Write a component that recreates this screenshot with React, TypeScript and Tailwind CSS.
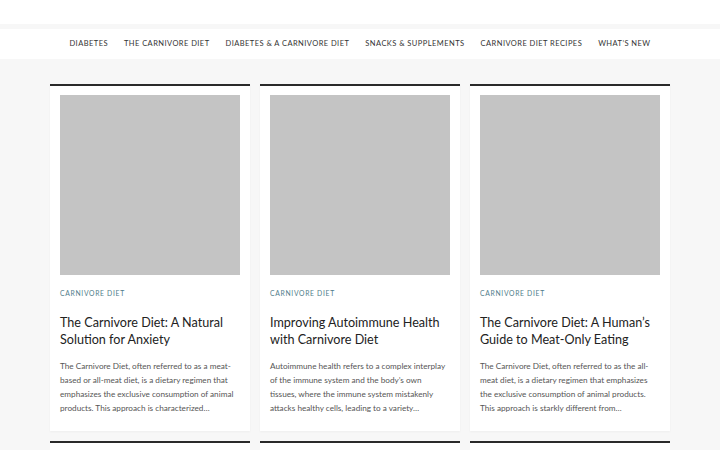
const nav = [
  "Diabetes",
  "The Carnivore Diet",
  "Diabetes & a Carnivore Diet",
  "Snacks & Supplements",
  "Carnivore Diet Recipes",
  "What’s New",
];

const posts = [
  {
    title: "The Carnivore Diet: A Natural Solution for Anxiety",
    excerpt:
      "The Carnivore Diet, often referred to as a meat-based or all-meat diet, is a dietary regimen that emphasizes the exclusive consumption of animal products. This approach is characterized…",
  },
  {
    title: "Improving Autoimmune Health with Carnivore Diet",
    excerpt:
      "Autoimmune health refers to a complex interplay of the immune system and the body’s own tissues, where the immune system mistakenly attacks healthy cells, leading to a variety…",
  },
  {
    title: "The Carnivore Diet: A Human’s Guide to Meat-Only Eating",
    excerpt:
      "The Carnivore Diet, often referred to as the all-meat diet, is a dietary regimen that emphasizes the exclusive consumption of animal products. This approach is starkly different from…",
  },
];

export default function App() {
  return (
    <div className="h-[450px] overflow-hidden bg-[#f7f7f7] font-['Lato',sans-serif]">
      <div className="h-6 bg-white" />
      <div className="h-[5px] bg-[#f7f7f7]" />
      <nav className="h-[30px] bg-white flex items-center justify-center gap-[16px]">
        {nav.map((n) => (
          <a key={n} className="text-[7.5px] uppercase tracking-[0.06em] text-[#333]">
            {n}
          </a>
        ))}
      </nav>
      <main className="w-[620px] mx-auto pt-[25px] grid grid-cols-3 gap-x-[10px] gap-y-[10px]">
        {posts.map((p) => (
          <Card key={p.title} {...p} />
        ))}
        {posts.map((p) => (
          <div key={p.title + "2"} className="border-t-2 border-[#2a2a2a] bg-white h-[40px]" />
        ))}
      </main>
    </div>
  );
}

function Card({ title, excerpt }: { title: string; excerpt: string }) {
  return (
    <article className="border-t-2 border-[#2a2a2a] bg-white px-[10px] pt-[9px] pb-[16px] shadow-[0_1px_2px_rgba(0,0,0,0.04)]">
      <div className="h-[180px] bg-[#c4c4c4]" />
      <div className="mt-[13px] text-[6.8px] uppercase tracking-[0.1em] text-[#4f7c8a]">Carnivore Diet</div>
      <h2 className="mt-[16px] text-[12.6px] leading-[17px] text-[#222]">{title}</h2>
      <p className="mt-[11px] text-[8.2px] leading-[14px] text-[#555]">{excerpt}</p>
    </article>
  );
}
